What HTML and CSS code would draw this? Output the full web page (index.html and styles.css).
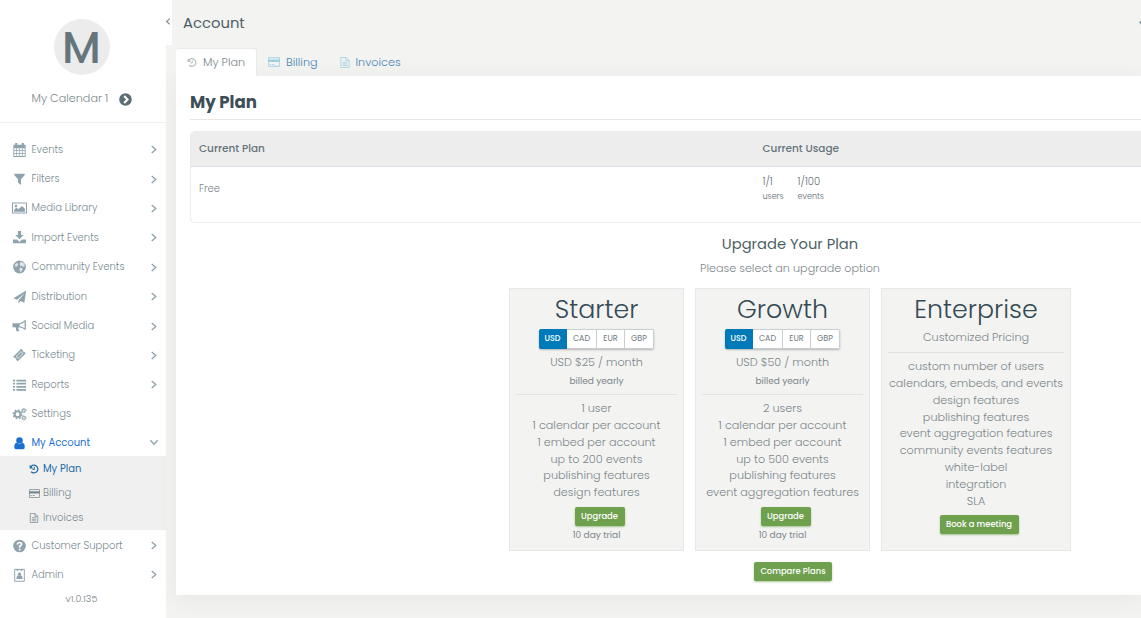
FILE: index.html
```html
<!DOCTYPE html>
<html lang="en">
<head>
  <meta charset="UTF-8">
  <meta name="viewport" content="width=device-width, initial-scale=1.0">
  <title>Account - My Plan</title>
  <link rel="stylesheet" href="styles.css">
</head>
<body>
  <!-- Shared icons -->
  <svg class="sprite" aria-hidden="true">
    <symbol id="chevron" viewBox="0 0 8 10"><path d="M1.5 1 6 5 1.5 9" fill="none" stroke="currentColor" stroke-width="1.5"/></symbol>
    <symbol id="history" viewBox="0 0 16 16"><path d="M2.6 4.6A6.3 6.3 0 1 1 3.3 12.4" fill="none" stroke="currentColor" stroke-width="2"/><path d="M1 1.2V7h5.8z"/><path d="M8.4 4.6v4.2H5.6" fill="none" stroke="currentColor" stroke-width="1.6"/></symbol>
    <symbol id="card" viewBox="0 0 18 14"><path fill-rule="evenodd" d="M1.5 0h15Q18 0 18 1.5v11q0 1.5-1.5 1.5h-15Q0 14 0 12.5v-11Q0 0 1.5 0zM1.2 1.2v2h15.6v-2zM1.2 7v5.8h15.6V7zM2.5 10h2.3v1.2H2.5zm3.5 0h3.5v1.2H6z"/></symbol>
    <symbol id="file" viewBox="0 0 14 16"><path d="M1 .7h7.5L13 5.2v10.1H1zM8.5.7v4.5H13M3.5 7.5h7M3.5 10h7M3.5 12.5h7" fill="none" stroke="currentColor" stroke-width="1.2"/></symbol>
  </svg>

  <div class="app">
    <aside class="sidebar">
      <div class="profile">
        <div class="avatar">M</div>
        <div class="calendar-name">
          <span>My Calendar 1</span>
          <svg viewBox="0 0 16 16"><circle cx="8" cy="8" r="7.7"/><path d="M6.3 3.8 10.5 8l-4.2 4.2" fill="none" stroke="#fff" stroke-width="2.5"/></svg>
        </div>
      </div>

      <nav class="menu">
        <a class="item"><svg class="icon" viewBox="0 0 16 16"><path fill-rule="evenodd" d="M1 2h2V0h2.500v2h5V0H13v2h2v14H1zM2 6v2.300h2.400V6zm3.200 0v2.300h2.400V6zm3.200 0v2.300h2.400V6zm3.200 0v2.300H14V6zM2 9.100v2.300h2.400V9.100zm3.200 0v2.300h2.400V9.100zm3.200 0v2.300h2.400V9.100zm3.200 0v2.300H14V9.100zM2 12.200v2.700h2.400v-2.700zm3.200 0v2.700h2.400v-2.700zm3.200 0v2.700h2.400v-2.700zm3.200 0v2.700H14v-2.700z"/></svg><span>Events</span><svg class="arrow"><use href="#chevron"/></svg></a>
        <a class="item"><svg class="icon" viewBox="0 0 16 16"><path d="M2 2h12v1.500L9.700 8.200v6.600L6.300 12V8.200L2 3.500z"/></svg><span>Filters</span><svg class="arrow"><use href="#chevron"/></svg></a>
        <a class="item"><svg class="icon" viewBox="0 0 18 15"><path fill-rule="evenodd" d="M0 1h18v13H0zM1.200 2.200v10.600h15.600V2.200z"/><circle cx="4.700" cy="5" r="1.500"/><path d="M2.500 12V9.500L5.500 7l2 2L12 5l3.500 3.500V12z"/></svg><span>Media Library</span><svg class="arrow"><use href="#chevron"/></svg></a>
        <a class="item"><svg class="icon" viewBox="0 0 16 16"><path d="M6.200 0h3.600v4.700h3L8 9.500 3.200 4.700h3zM.5 9.800h4.700L8 12.500l2.800-2.700h4.700V14H.5z"/></svg><span>Import Events</span><svg class="arrow"><use href="#chevron"/></svg></a>
        <a class="item"><svg class="icon" viewBox="0 0 16 16"><circle cx="8" cy="8" r="7.300"/><path d="M9 1.800 13.500 4l.5 3-2.500 1L11 6.500 9 7l-1-2.300 1-1.200zM8.500 8.500l3 1-.5 2.500-2 2.200-1-2.700zM3 4.500 5.500 3l1 2L5 7.500 3 8z" fill="#fff" opacity=".7"/></svg><span>Community Events</span><svg class="arrow"><use href="#chevron"/></svg></a>
        <a class="item"><svg class="icon" viewBox="0 0 16 16"><path d="M15.700.5 13.500 14.500 9.300 12.700 7 15.500V11.700L14 3.500 5.300 11 1 9.300z"/></svg><span>Distribution</span><svg class="arrow"><use href="#chevron"/></svg></a>
        <a class="item"><svg class="icon" viewBox="0 0 16 16"><path fill-rule="evenodd" d="M0 4.800h7.500Q11.500 4.300 14 1.300h1.200v4.400q1.200.9 0 2v4.600H14Q11.500 9.500 7 9.300L6.500 10.800 8 13.600 4.700 14.400 3.500 9.300H0zM8.200 6v2.200q3.300.4 5.600 2.400V3.300Q11.500 5.500 8.200 6z"/></svg><span>Social Media</span><svg class="arrow"><use href="#chevron"/></svg></a>
        <a class="item"><svg class="icon" viewBox="0 0 16 16"><path fill-rule="evenodd" d="M10 .8 11.500 2.300q-.3 2.100 1.900 2.200L15.200 6 6 15.200l-1.600-1.600q.3-2.200-2-2.100L.8 10zM9.700 3.700 3.700 9.700l2.700 2.700 6-6zM9.700 4.600l1.800 1.800L6.400 11.500 4.600 9.700z"/></svg><span>Ticketing</span><svg class="arrow"><use href="#chevron"/></svg></a>
        <a class="item"><svg class="icon" viewBox="0 0 16 16"><path d="M.5 2H3v2H.5zM4.500 2h11v2h-11zM.5 5.500H3v2H.5zm4 0h11v2h-11zM.5 9H3v2H.5zm4 0h11v2h-11zm-4 3.500H3v2H.5zm4 0h11v2h-11z"/></svg><span>Reports</span><svg class="arrow"><use href="#chevron"/></svg></a>
        <a class="item"><svg class="icon" viewBox="0 0 16 16"><g fill="none" stroke="currentColor"><circle cx="5.800" cy="8.300" r="3.300" stroke-width="2.200"/><circle cx="5.800" cy="8.300" r="5" stroke-width="1.500" stroke-dasharray="2 1.927"/><circle cx="13" cy="4" r="1.600" stroke-width="1.200"/><circle cx="13" cy="4" r="2.500" stroke-width=".9" stroke-dasharray="1.200 .763"/><circle cx="13" cy="12.400" r="1.600" stroke-width="1.200"/><circle cx="13" cy="12.400" r="2.500" stroke-width=".9" stroke-dasharray="1.200 .763"/></g></svg><span>Settings</span></a>
        <a class="item current"><svg class="icon" viewBox="0 0 16 16"><circle cx="8" cy="5" r="3.700"/><path d="M4.700 7.800Q8 10.300 11.300 7.800 14 8.500 14 12.500 14 15 12 15H4Q2 15 2 12.500 2 8.500 4.700 7.800z"/></svg><span>My Account</span><svg class="arrow down"><use href="#chevron"/></svg></a>

        <div class="submenu">
          <a class="subitem active"><svg><use href="#history"/></svg>My Plan</a>
          <a class="subitem"><svg class="card-icon"><use href="#card"/></svg>Billing</a>
          <a class="subitem"><svg><use href="#file"/></svg>Invoices</a>
        </div>

        <a class="item"><svg class="icon" viewBox="0 0 16 16"><circle cx="8" cy="8" r="7.200"/><path d="M5.600 6.300Q5.800 4 8 4q2.400 0 2.400 2Q10.400 7.200 8.200 8.300V10M8.200 11v2" fill="none" stroke="#fff" stroke-width="1.900"/></svg><span>Customer Support</span><svg class="arrow"><use href="#chevron"/></svg></a>
        <a class="item"><svg class="icon" viewBox="0 0 16 16"><path d="M2.500 1.500h11v13.700h-11z" fill="none" stroke="currentColor" stroke-width="1.100"/><path d="M4.500 1h2.300v2H4.500zm4.700 0h2.300v2H9.200z"/><circle cx="8" cy="7" r="1.900"/><path d="M4.500 12.700Q4.500 9 6.500 8.700h3q2 .3 2 4z"/></svg><span>Admin</span><svg class="arrow"><use href="#chevron"/></svg></a>
      </nav>
      <div class="version">v1.0.135</div>
    </aside>

    <div class="toggle"><svg><use href="#chevron"/></svg></div>

    <main class="main">
      <header class="topbar">
        <h1>Account</h1>
        <svg viewBox="0 0 4 8"><path d="M0 4 4 0v8z"/></svg>
      </header>

      <div class="tabs">
        <a class="tab active"><svg><use href="#history"/></svg>My Plan</a>
        <a class="tab"><svg class="card-icon"><use href="#card"/></svg>Billing</a>
        <a class="tab"><svg><use href="#file"/></svg>Invoices</a>
      </div>

      <section class="panel">
        <h2>My Plan</h2>

        <div class="usage">
          <div class="usage-row usage-head">
            <div>Current Plan</div>
            <div>Current Usage</div>
          </div>
          <div class="usage-row usage-body">
            <div class="plan-name">Free</div>
            <div class="counts">
              <div>1/1<small>users</small></div>
              <div>1/100<small>events</small></div>
            </div>
          </div>
        </div>

        <div class="upgrade">
          <h3>Upgrade Your Plan</h3>
          <p class="hint">Please select an upgrade option</p>

          <div class="plans">
            <div class="plan">
              <h4>Starter</h4>
              <div class="currency">
                <button class="selected">USD</button><button>CAD</button><button>EUR</button><button>GBP</button>
              </div>
              <div class="price">USD $25 / month</div>
              <div class="billed">billed yearly</div>
              <ul>
                <li>1 user</li>
                <li>1 calendar per account</li>
                <li>1 embed per account</li>
                <li>up to 200 events</li>
                <li>publishing features</li>
                <li>design features</li>
              </ul>
              <button class="btn btn-upgrade">Upgrade</button>
              <div class="trial">10 day trial</div>
            </div>

            <div class="plan">
              <h4>Growth</h4>
              <div class="currency">
                <button class="selected">USD</button><button>CAD</button><button>EUR</button><button>GBP</button>
              </div>
              <div class="price">USD $50 / month</div>
              <div class="billed">billed yearly</div>
              <ul>
                <li>2 users</li>
                <li>1 calendar per account</li>
                <li>1 embed per account</li>
                <li>up to 500 events</li>
                <li>publishing features</li>
                <li>event aggregation features</li>
              </ul>
              <button class="btn btn-upgrade">Upgrade</button>
              <div class="trial">10 day trial</div>
            </div>

            <div class="plan enterprise">
              <h4>Enterprise</h4>
              <div class="price">Customized Pricing</div>
              <ul>
                <li>custom number of users</li>
                <li>calendars, embeds, and events</li>
                <li>design features</li>
                <li>publishing features</li>
                <li>event aggregation features</li>
                <li>community events features</li>
                <li>white-label</li>
                <li>integration</li>
                <li>SLA</li>
              </ul>
              <button class="btn btn-meeting">Book a meeting</button>
            </div>
          </div>

          <button class="btn btn-compare">Compare Plans</button>
        </div>
      </section>
    </main>
  </div>
</body>
</html>
```
FILE: styles.css
```css
* {
  box-sizing: border-box;
}
body {
  margin: 0;
  background-color: #f3f3f1;
  color: #7b868b;
  font-family: Poppins, Inter, "Open Sans", sans-serif;
  font-weight: 300;
  font-size: 12px;
  overflow: hidden;
}
h1, h2, h3, h4, p, ul {
  margin: 0;
  padding: 0;
}
svg {
  fill: currentColor;
  flex-shrink: 0;
}
button {
  font-family: inherit;
  padding: 0;
  cursor: pointer;
}
.sprite {
  display: none;
}
.app {
  display: flex;
  height: 618px;
}

/* Sidebar */
.sidebar {
  width: 166px;
  flex-shrink: 0;
  background-color: #fff;
}
.profile {
  height: 123px;
  padding-top: 19px;
  border-bottom: 1px solid #f0f0f0;
}
.avatar {
  width: 56px;
  height: 56px;
  margin: 0 0 0 53.5px;
  border-radius: 50%;
  background-color: #ececec;
  color: #65757c;
  font-size: 44px;
  font-weight: 500;
  line-height: 57px;
  text-align: center;
}
.calendar-name {
  display: flex;
  align-items: center;
  justify-content: space-between;
  width: 100.5px;
  height: 20px;
  margin: 14px 0 0 31.5px;
  font-size: 11.2px;
  line-height: 19px;
  white-space: nowrap;
}
.calendar-name span {
  height: 20px;
}
.calendar-name svg {
  width: 13px;
  height: 13px;
  color: #5c6d74;
}
.menu {
  padding-top: 12px;
}
.item {
  display: flex;
  align-items: center;
  height: 29.4px;
  padding: 0 8px 0 12px;
  font-size: 10px;
  color: #788a90;
}
.item .icon {
  width: 15px;
  height: 14px;
  margin-right: 4.5px;
  color: #8fa3ad;
}
.item span {
  flex: 1;
  white-space: nowrap;
}
.arrow {
  width: 8px;
  height: 9px;
  color: #8fa3ad;
}
.arrow.down {
  transform: rotate(90deg);
}
.item.current,
.item.current .icon {
  color: #1a6fd0;
}
.item.current {
  height: 27px;
  padding-top: 1px;
  font-weight: 400;
}
.submenu {
  height: 74px;
  padding-top: 1px;
  margin-bottom: 1px;
  background-color: #f0f0f0;
}
.subitem {
  display: flex;
  align-items: center;
  gap: 4px;
  height: 24.4px;
  padding-left: 29px;
  font-size: 10px;
  color: #788a90;
}
.subitem svg {
  width: 10px;
  height: 10px;
}
.subitem .card-icon {
  width: 11px;
  height: 9px;
  margin-right: -1px;
}
.subitem.active {
  color: #1b6ca6;
  font-weight: 400;
}
.version {
  width: 163px;
  line-height: 17px;
  font-size: 9.6px;
  text-align: center;
}
.toggle {
  width: 6px;
  height: 45px;
  flex-shrink: 0;
  background-color: #fff;
  padding-top: 18px;
}
.toggle svg {
  display: block;
  width: 6px;
  height: 7px;
  margin-left: -1px;
  transform: scaleX(-1);
}

/* Main area */
.main {
  flex: 1;
  min-width: 0;
  padding-left: 4px;
}
.topbar {
  display: flex;
  align-items: center;
  justify-content: space-between;
  height: 48px;
  padding: 0 0 3px 7px;
}
.topbar h1 {
  font-size: 14.8px;
  font-weight: 400;
  color: #4d5f66;
}
.topbar svg {
  width: 2px;
  height: 5px;
  color: #7f99a8;
}
.tabs {
  display: flex;
  height: 28px;
}
.tab {
  display: flex;
  align-items: center;
  gap: 6px;
  padding: 0 11px;
  font-size: 11.2px;
  color: #4785b8;
  white-space: nowrap;
}
.tab svg {
  width: 10px;
  height: 11px;
  color: #9fd0e2;
}
.tab .card-icon {
  width: 12px;
  height: 10px;
}
.tab.active {
  position: relative;
  z-index: 1;
  width: 81px;
  background-color: #fff;
  color: #7b868b;
  border: 1px solid #e9e9e8;
  border-width: 1px 1px 0 0;
  border-radius: 3px 3px 0 0;
}
.tab.active svg {
  color: #b9bec0;
}
.panel {
  height: 519px;
  padding-left: 14px;
  background-color: #fff;
  box-shadow: 0 4px 22px rgba(0, 0, 0, 0.06);
}
.panel h2 {
  height: 44px;
  line-height: 53px;
  border-bottom: 1px solid #e6e6e6;
  color: #3c4f58;
  font-size: 16.6px;
  font-weight: 700;
}
.usage {
  height: 92px;
  margin-top: 11px;
  border: 1px solid #ececec;
  border-right: none;
  border-radius: 5px 0 0 5px;
  overflow: hidden;
}
.usage-row {
  display: grid;
  grid-template-columns: 563.5px 1fr;
  padding-left: 8px;
}
.usage-head {
  height: 35px;
  line-height: 33px;
  background-color: #ededed;
  border-bottom: 1px solid #dae0e5;
  color: #65747a;
  font-size: 10.5px;
  font-weight: 500;
}
.plan-name {
  padding-top: 14px;
  line-height: 16px;
  font-size: 10px;
}
.counts {
  display: flex;
  gap: 14px;
  padding-top: 7px;
  font-size: 10px;
  line-height: 15px;
  color: #5e6d74;
}
.counts small {
  display: block;
  font-size: 8px;
  line-height: 16px;
}

/* Upgrade options */
.upgrade {
  display: flex;
  flex-direction: column;
  align-items: center;
  width: 562px;
  margin-left: 319px;
}
.upgrade h3 {
  height: 23px;
  margin-top: 10px;
  line-height: 23px;
  color: #4d5f66;
  font-size: 14.7px;
  font-weight: 400;
}
.hint {
  height: 32px;
  line-height: 25px;
  font-size: 11.2px;
}
.plans {
  display: flex;
  gap: 11px;
}
.plan {
  width: 175px;
  height: 263px;
  padding: 6px 6px 0;
  display: flex;
  flex-direction: column;
  align-items: center;
  background-color: #f3f3f1;
  border: 1px solid #e8e8e8;
  font-size: 11.2px;
  white-space: nowrap;
}
.plan.enterprise {
  width: 190px;
}
.plan h4 {
  height: 34px;
  line-height: 28px;
  font-size: 25.3px;
  font-weight: 300;
  color: #344a54;
}
.currency {
  display: flex;
  height: 20px;
  border-radius: 2px;
  box-shadow: 0 1px 2px rgba(0, 0, 0, 0.25);
}
.currency button {
  width: 28px;
  border: 1px solid #c9ced1;
  border-left: none;
  background-color: #fff;
  color: #6f7a80;
  font-size: 8px;
  font-weight: 400;
}
.currency button:nth-child(2) {
  width: 30px;
}
.currency button:last-child {
  width: 29px;
  border-radius: 0 2px 2px 0;
}
.currency .selected {
  border-color: #0079b8;
  border-radius: 2px 0 0 2px;
  background-color: #0079b8;
  color: #fff;
  font-weight: 500;
}
.price {
  height: 23px;
  line-height: 27px;
}
.billed {
  height: 22px;
  line-height: 18px;
  font-size: 9px;
  font-weight: 400;
}
.plan ul {
  width: 100%;
  padding: 5px 0 1px;
  border-top: 1px solid #e3e3e1;
  list-style: none;
  text-align: center;
}
.plan li {
  height: 16.85px;
  line-height: 16.85px;
}
.btn {
  height: 19px;
  border: none;
  border-radius: 2px;
  background-color: #6fa04e;
  box-shadow: 0 1px 2px rgba(111, 160, 78, 0.6);
  color: #fff;
  font-size: 8.4px;
  font-weight: 500;
}
.btn-upgrade {
  width: 50px;
  margin: 5px 0 0 6px;
}
.trial {
  line-height: 18px;
  font-size: 9px;
  font-weight: 400;
}
.enterprise .price {
  line-height: 17px;
}
.btn-meeting {
  width: 79px;
  margin: 4px 0 0 6px;
}
.btn-compare {
  width: 78px;
  margin: 11px 0 0 6px;
}
```
